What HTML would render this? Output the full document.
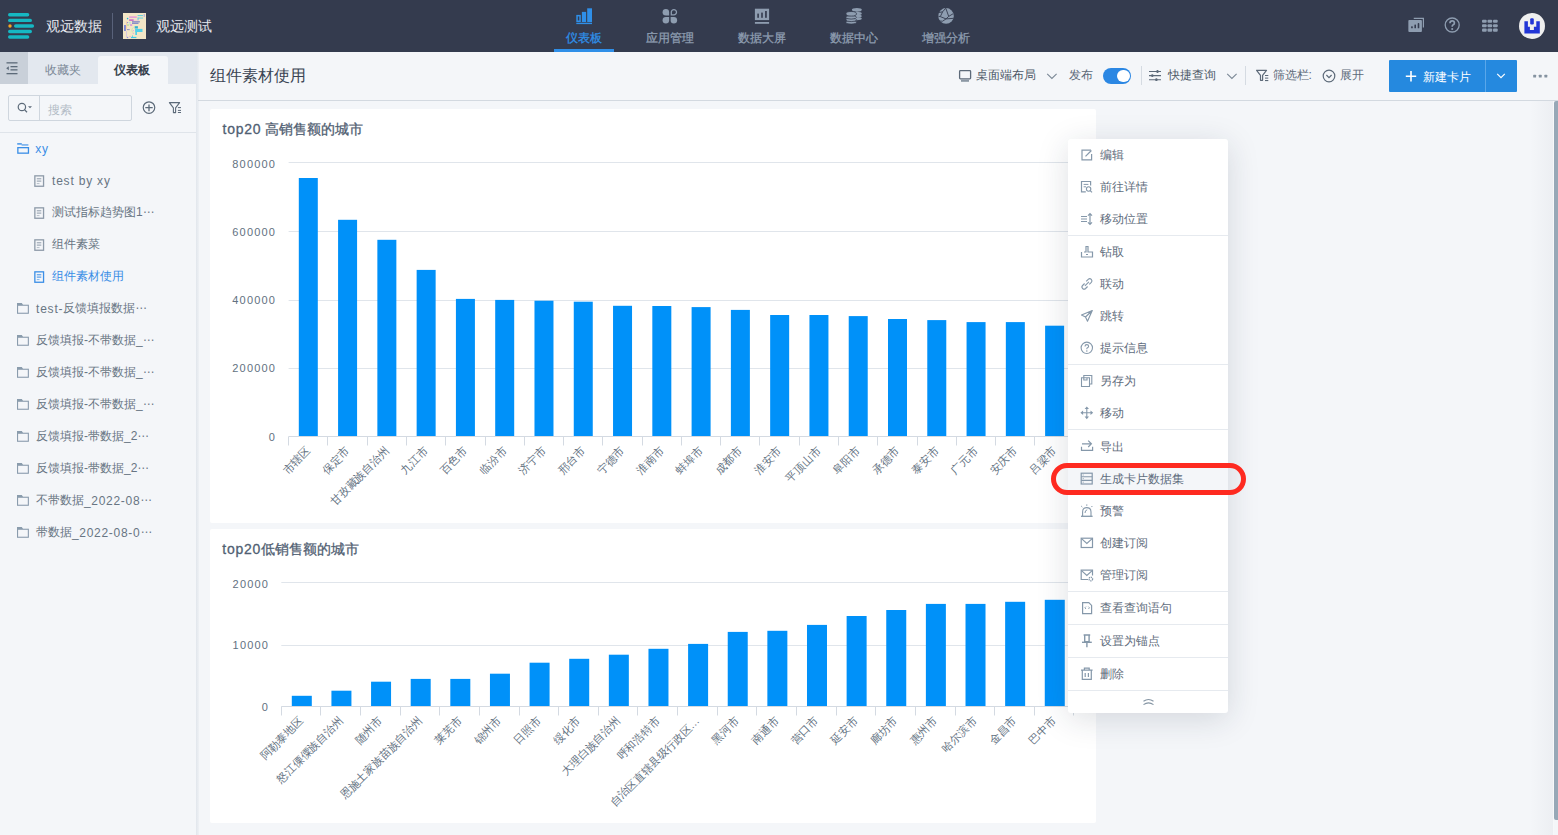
<!DOCTYPE html><html><head><meta charset="utf-8"><style>
*{margin:0;padding:0;box-sizing:border-box}
html,body{width:1558px;height:835px;overflow:hidden;background:#f4f6f9;font-family:"Liberation Sans",sans-serif;}
.a{position:absolute;white-space:nowrap}
.t{position:absolute;white-space:nowrap;line-height:16px;font-size:12px}
.nav{position:absolute;top:30px;font-size:12px;line-height:16px;color:#8d9cb0}
.ls{letter-spacing:.8px;position:relative;top:.8px}
.el{position:relative;top:-3px;letter-spacing:.5px}
</style></head><body>
<div class="a" style="left:0px;top:0px;width:1558px;height:52px;background:#343b4e;"></div>
<svg class="a" style="left:0px;top:0px;" width="40" height="52" viewBox="0 0 40 52"><g stroke="#16b8c3" stroke-width="3.4" stroke-linecap="round">
<line x1="9.7" y1="14.8" x2="27.6" y2="14.8"/><line x1="9.7" y1="20.4" x2="30.3" y2="20.4"/>
<line x1="15.7" y1="26" x2="32.4" y2="26"/><line x1="9.7" y1="31.5" x2="30.3" y2="31.5"/>
<line x1="9.7" y1="37" x2="27.6" y2="37"/></g><circle cx="10" cy="26" r="1.7" fill="#f6a623"/></svg>
<div class="t" style="left:46.0px;top:17.8px;font-size:14px;color:#e6e9ee;">观远数据</div>
<div class="a" style="left:112px;top:13px;width:1px;height:26px;background:#59627a;"></div>
<svg class="a" style="left:123px;top:12.9px;" width="23" height="26" viewBox="0 0 23 26"><rect width="23" height="26" fill="#f3e6c6"/>
<rect x="1" y="12" width="1.9" height="6" fill="#7d86d2"/>
<rect x="3" y="8.6" width=".7" height="8" fill="#f5c59c"/><rect x="3" y="18" width=".7" height="6.6" fill="#cbbbe6"/>
<circle cx="4.6" cy="5.6" r=".8" fill="#1ab0e0"/><circle cx="4.6" cy="9.6" r=".7" fill="#8c90d8"/><circle cx="4.6" cy="24.5" r=".7" fill="#8c90d8"/>
<rect x="6.1" y="3.3" width="7.7" height="1.7" fill="#e6a2d6"/>
<rect x="6.1" y="6.3" width="4.6" height="1.6" fill="#c66ac8"/><rect x="10.7" y="6.8" width="5.3" height=".6" fill="#eab8dc"/>
<rect x="14.6" y="2.1" width="5.3" height="1" fill="#5cd0e0"/><rect x="14.6" y="4.6" width="5.5" height=".9" fill="#5cd0e0"/><rect x="14.6" y="4.6" width=".9" height="2.6" fill="#5cd0e0"/>
<rect x="20.7" y="1.1" width="1.1" height="2.7" fill="#a8a8e0"/>
<rect x="9" y="8.2" width="7.9" height="1.2" fill="#7f86c8"/><rect x="9" y="9.6" width="6.5" height="1.3" fill="#7f86c8"/>
<rect x="6" y="8.9" width="1.8" height=".8" fill="#9ee0e0"/><rect x="6" y="10.6" width="1.8" height=".8" fill="#9ee0e0"/>
<rect x="4" y="11.3" width="2.1" height="1.5" fill="#b8e0a0"/><rect x="7.1" y="11.3" width="2.1" height="1.5" fill="#d88ad8"/>
<rect x="11.7" y="13.2" width="3.2" height="2.3" fill="#30b0d0"/>
<rect x="4" y="16.3" width="2.7" height=".8" fill="#7078c0"/>
<path d="M10.5 14.5 A2.6 2.8 0 0 0 10.5 19.8" fill="none" stroke="#c6e4a6" stroke-width=".7"/>
<rect x="12.3" y="15.9" width="7.2" height="3.1" fill="#52d0e8"/><rect x="12.3" y="15.9" width="1.7" height="6.1" fill="#52d0e8"/>
<circle cx="10.3" cy="17.6" r=".6" fill="#e6a0d8"/><circle cx="10.3" cy="20.5" r=".6" fill="#e6a0d8"/>
<rect x="8" y="23.9" width="5.4" height="1.2" fill="#40c8e8"/><rect x="9" y="22.4" width=".7" height="1.6" fill="#40c8e8"/>
<rect x="6.1" y="23.2" width="1.9" height=".9" fill="#e6b0e0"/></svg>
<div class="t" style="left:156.0px;top:17.8px;font-size:14px;color:#e6e9ee;">观远测试</div>
<div class="t" style="left:565.6px;top:30.2px;font-size:12px;color:#2f8fe8;-webkit-text-stroke:.3px #2f8fe8">仪表板</div>
<div class="t" style="left:646.1px;top:30.2px;font-size:12px;color:#8e9db0;-webkit-text-stroke:.3px #8e9db0">应用管理</div>
<div class="t" style="left:737.6px;top:30.2px;font-size:12px;color:#8e9db0;-webkit-text-stroke:.3px #8e9db0">数据大屏</div>
<div class="t" style="left:830.1px;top:30.2px;font-size:12px;color:#8e9db0;-webkit-text-stroke:.3px #8e9db0">数据中心</div>
<div class="t" style="left:921.6px;top:30.2px;font-size:12px;color:#8e9db0;-webkit-text-stroke:.3px #8e9db0">增强分析</div>
<div class="a" style="left:554px;top:49px;width:60px;height:3px;background:#2f8fe8;"></div>
<svg class="a" style="left:572px;top:4px;" width="24" height="24" viewBox="0 0 24 24"><g fill="#2f8fe8"><rect x="5.05" y="11.65" width="3" height="5.6" fill="none" stroke="#2f8fe8" stroke-width="1.5"/>
<rect x="9.9" y="7.9" width="4.2" height="10.1"/><rect x="15.2" y="4.3" width="4.8" height="13.7"/>
<rect x="4.3" y="18.7" width="15.7" height="1.4"/></g></svg>
<svg class="a" style="left:658px;top:4px;" width="24" height="24" viewBox="0 0 24 24"><g fill="#8e9db0"><path d="M11.1 11.5 H7.85 A3.25 3.25 0 1 1 11.1 8.25 Z"/><path d="M11.1 12.9 H7.85 A3.25 3.25 0 1 0 11.1 16.15 Z"/>
<path d="M12.6 12.9 H15.85 A3.25 3.25 0 1 1 12.6 16.15 Z"/></g>
<path d="M13.3 10.8 V8.25 A2.6 2.6 0 1 1 15.85 10.8 Z" fill="none" stroke="#8e9db0" stroke-width="1.3"/></svg>
<svg class="a" style="left:750px;top:4px;" width="24" height="24" viewBox="0 0 24 24"><rect x="4.9" y="4.7" width="14.2" height="11.4" fill="#8e9db0"/>
<g fill="#343b4e"><rect x="7.3" y="9.6" width="1.6" height="4.2"/><rect x="11.2" y="8.6" width="1.6" height="5.2"/><rect x="15.1" y="7" width="1.7" height="6.8"/></g>
<rect x="4.9" y="18" width="14.2" height="1.8" fill="#8e9db0"/></svg>
<svg class="a" style="left:842px;top:4px;" width="24" height="24" viewBox="0 0 24 24"><g fill="#8e9db0">
<ellipse cx="14.85" cy="14.6" rx="4.95" ry="1.6"/><ellipse cx="14.85" cy="12" rx="4.95" ry="1.6"/><ellipse cx="14.85" cy="9.4" rx="4.95" ry="1.6"/><ellipse cx="14.85" cy="5.8" rx="4.95" ry="1.9"/>
</g><g fill="#8e9db0" stroke="#343b4e" stroke-width=".8">
<ellipse cx="9.2" cy="18.3" rx="5.3" ry="1.8"/><ellipse cx="9.2" cy="15.8" rx="5.3" ry="1.8"/><ellipse cx="9.2" cy="13.3" rx="5.3" ry="1.8"/><ellipse cx="9.2" cy="9.8" rx="5.3" ry="2.3"/>
</g></svg>
<svg class="a" style="left:934px;top:4px;" width="24" height="24" viewBox="0 0 24 24"><circle cx="12.05" cy="11.9" r="7.8" fill="#8e9db0"/>
<g stroke="#343b4e" stroke-width=".9" fill="none" stroke-linejoin="round"><path d="M11.8 4.2 L8.6 7.8 L6.3 12.6 L12 14.9 L19.8 14.3"/><path d="M11.8 4.2 L14.7 12.4 L19 9.8"/><path d="M14.7 12.4 L12 14.9 L8.6 17.2 L5.2 17"/><path d="M4.3 12.2 L6.3 12.6"/><path d="M8.6 7.8 L4.6 8.6"/></g></svg>
<svg class="a" style="left:1404px;top:14px;" width="24" height="22" viewBox="0 0 24 22"><path d="M9.75 4.4 H19.4 V13.4" fill="none" stroke="#8e9db0" stroke-width="1.2"/>
<rect x="4.35" y="6.06" width="13.55" height="11.84" rx=".9" fill="#8e9db0"/>
<g fill="#343b4e"><rect x="7.1" y="12.25" width="1.7" height="2.1" rx=".6"/><rect x="10.4" y="10.5" width="1.6" height="3.85" rx=".6"/><rect x="13.7" y="9.1" width="1.6" height="5.25" rx=".6"/></g></svg>
<svg class="a" style="left:1442px;top:15px;" width="20" height="20" viewBox="0 0 20 20"><circle cx="10.2" cy="10" r="7" fill="none" stroke="#8e9db0" stroke-width="1.3"/>
<path d="M8 8.2 Q8 5.8 10.2 5.8 Q12.4 5.8 12.4 8 Q12.4 9.4 10.9 10.1 Q10.2 10.5 10.2 11.8" fill="none" stroke="#8e9db0" stroke-width="1.7"/>
<circle cx="10.2" cy="14" r="1.05" fill="#8e9db0"/></svg>
<svg class="a" style="left:1480px;top:15px;" width="20" height="20" viewBox="0 0 20 20"><rect x="2.00" y="4.70" width="4.7" height="3.1" rx="1" fill="#8e9db0"/><rect x="7.50" y="4.70" width="4.7" height="3.1" rx="1" fill="#8e9db0"/><rect x="13.00" y="4.70" width="4.7" height="3.1" rx="1" fill="#8e9db0"/><rect x="2.00" y="9.15" width="4.7" height="3.1" rx="1" fill="#8e9db0"/><rect x="7.50" y="9.15" width="4.7" height="3.1" rx="1" fill="#8e9db0"/><rect x="13.00" y="9.15" width="4.7" height="3.1" rx="1" fill="#8e9db0"/><rect x="2.00" y="13.60" width="4.7" height="3.1" rx="1" fill="#8e9db0"/><rect x="7.50" y="13.60" width="4.7" height="3.1" rx="1" fill="#8e9db0"/><rect x="13.00" y="13.60" width="4.7" height="3.1" rx="1" fill="#8e9db0"/></svg>
<div class="a" style="left:1519.2px;top:12.85px;width:25.8px;height:25.8px;background:#efefef;border-radius:50%"></div>
<svg class="a" style="left:1518px;top:12px;" width="28" height="28" viewBox="0 0 28 28"><path fill="#2236d6" d="M6.4 9.2 H9.9 V14.8 H11.9 V18.1 H15.9 V14.8 H18.3 V9.2 H21.8 V21.5 H6.4 Z"/><rect x="12.2" y="6.2" width="3.6" height="6.2" rx="1.2" fill="#2236d6"/></svg>
<div class="a" style="left:0px;top:52px;width:196px;height:783px;background:#f4f6f9;"></div>
<div class="a" style="left:0px;top:52px;width:196px;height:32px;background:#e3e8ef;"></div>
<div class="a" style="left:0px;top:52px;width:28px;height:32px;background:#c9d0d9;"></div>
<div class="a" style="left:98px;top:56px;width:70px;height:28px;background:#f4f6f9;border-radius:3px 3px 0 0"></div>
<svg class="a" style="left:4px;top:58px;" width="22" height="22" viewBox="0 0 22 22"><g fill="#5c6a79"><rect x="2.5" y="4.2" width="11" height="1.3"/><rect x="6.5" y="8" width="7" height="1.3"/><rect x="6.5" y="11.2" width="7" height="1.3"/><rect x="2.5" y="15" width="11" height="1.3"/>
<path d="M2.2 10.3 L4.8 8.3 V12.3 Z"/></g></svg>
<div class="t" style="left:44.8px;top:62.1px;font-size:12px;color:#7a8795;">收藏夹</div>
<div class="t" style="left:114.3px;top:62.3px;font-size:12px;color:#2b3442;-webkit-text-stroke:.45px #2b3442">仪表板</div>
<div class="a" style="left:8px;top:95px;width:124px;height:26px;background:transparent;border:1px solid #cfd6de;border-radius:2px"></div>
<div class="a" style="left:39px;top:95px;width:1px;height:26px;background:#cfd6de;"></div>
<svg class="a" style="left:14px;top:98px;" width="22" height="20" viewBox="0 0 22 20"><circle cx="7.9" cy="9" r="3.7" fill="none" stroke="#5c6a79" stroke-width="1.2"/>
<path d="M10.5 11.6 L13 14.2" stroke="#5c6a79" stroke-width="1.3"/><path d="M14 8.2 H18 L16 10.3 Z" fill="#5c6a79"/></svg>
<div class="t" style="left:47.5px;top:101.6px;font-size:12px;color:#b3bcc6;">搜索</div>
<svg class="a" style="left:140px;top:98px;" width="20" height="20" viewBox="0 0 20 20"><circle cx="9" cy="9.6" r="5.75" fill="none" stroke="#5c6a79" stroke-width="1.2"/><path d="M9 6.4 V13.2 M5.3 9.7 H12.7" stroke="#5c6a79" stroke-width="1.3"/></svg>
<svg class="a" style="left:166px;top:99px;" width="20" height="18" viewBox="0 0 20 18"><path d="M3.4 3.6 H13.6 L9.6 8.8 V13.6 H7.4 V8.8 Z" fill="none" stroke="#5c6a79" stroke-width="1.1" stroke-linejoin="round"/>
<g fill="#5c6a79"><rect x="11.9" y="8.1" width="3.1" height="1"/><rect x="11.9" y="10.9" width="3.1" height="1"/><rect x="11.9" y="13" width="3.1" height="1"/></g></svg>
<div class="a" style="left:0px;top:132px;width:196px;height:1px;background:#dfe4ea;"></div>
<svg class="a" style="left:16px;top:142px;" width="14" height="14" viewBox="0 0 14 14"><rect x="1.2" y="1.2" width="4.6" height="1.4" fill="#3a8ee6"/><rect x="5.6" y="2.4" width="6.8" height="1.1" fill="#3a8ee6"/><rect x="1.85" y="5.65" width="10.6" height="5.5" fill="none" stroke="#3a8ee6" stroke-width="1.3"/></svg>
<div class="t" style="left:35.3px;top:140.4px;font-size:12px;color:#3a8ee6;"><span class="ls">xy</span></div>
<svg class="a" style="left:33.8px;top:174.6px;" width="14" height="14" viewBox="0 0 14 14"><rect x="0.85" y="0.85" width="8.7" height="10.4" fill="none" stroke="#8d9aa8" stroke-width="1.3"/><path d="M2.8 3.8 H7.3 M2.8 6.1 H7.3" stroke="#8d9aa8" stroke-width="1"/><path d="M2.8 8.6 H5.5" stroke="#8d9aa8" stroke-width="1" opacity=".6"/></svg>
<div class="t" style="left:52.0px;top:172.4px;font-size:12px;color:#687583;"><span class="ls">test by xy</span></div>
<svg class="a" style="left:33.8px;top:206.6px;" width="14" height="14" viewBox="0 0 14 14"><rect x="0.85" y="0.85" width="8.7" height="10.4" fill="none" stroke="#8d9aa8" stroke-width="1.3"/><path d="M2.8 3.8 H7.3 M2.8 6.1 H7.3" stroke="#8d9aa8" stroke-width="1"/><path d="M2.8 8.6 H5.5" stroke="#8d9aa8" stroke-width="1" opacity=".6"/></svg>
<div class="t" style="left:52.0px;top:204.4px;font-size:12px;color:#687583;">测试指标趋势图1<span class="el">…</span></div>
<svg class="a" style="left:33.8px;top:238.6px;" width="14" height="14" viewBox="0 0 14 14"><rect x="0.85" y="0.85" width="8.7" height="10.4" fill="none" stroke="#8d9aa8" stroke-width="1.3"/><path d="M2.8 3.8 H7.3 M2.8 6.1 H7.3" stroke="#8d9aa8" stroke-width="1"/><path d="M2.8 8.6 H5.5" stroke="#8d9aa8" stroke-width="1" opacity=".6"/></svg>
<div class="t" style="left:52.0px;top:236.4px;font-size:12px;color:#687583;">组件素菜</div>
<svg class="a" style="left:33.8px;top:270.6px;" width="14" height="14" viewBox="0 0 14 14"><rect x="0.85" y="0.85" width="8.7" height="10.4" fill="none" stroke="#3a8ee6" stroke-width="1.3"/><path d="M2.8 3.8 H7.3 M2.8 6.1 H7.3" stroke="#3a8ee6" stroke-width="1"/><path d="M2.8 8.6 H5.5" stroke="#3a8ee6" stroke-width="1" opacity=".6"/></svg>
<div class="t" style="left:52.0px;top:268.4px;font-size:12px;color:#3a8ee6;">组件素材使用</div>
<svg class="a" style="left:16px;top:303.1px;" width="14" height="14" viewBox="0 0 14 14"><path d="M1 0.1 H5.8 L7.1 2 H1 Z" fill="#8a9cad"/><rect x="1.55" y="2.25" width="10.8" height="8" fill="none" stroke="#8a9cad" stroke-width="1.1"/></svg>
<div class="t" style="left:36.0px;top:300.4px;font-size:12px;color:#687583;"><span class="ls">test-</span>反馈填报数据<span class="el">…</span></div>
<svg class="a" style="left:16px;top:335.1px;" width="14" height="14" viewBox="0 0 14 14"><path d="M1 0.1 H5.8 L7.1 2 H1 Z" fill="#8a9cad"/><rect x="1.55" y="2.25" width="10.8" height="8" fill="none" stroke="#8a9cad" stroke-width="1.1"/></svg>
<div class="t" style="left:36.0px;top:332.4px;font-size:12px;color:#687583;">反馈填报-不带数据_<span class="el">…</span></div>
<svg class="a" style="left:16px;top:367.1px;" width="14" height="14" viewBox="0 0 14 14"><path d="M1 0.1 H5.8 L7.1 2 H1 Z" fill="#8a9cad"/><rect x="1.55" y="2.25" width="10.8" height="8" fill="none" stroke="#8a9cad" stroke-width="1.1"/></svg>
<div class="t" style="left:36.0px;top:364.4px;font-size:12px;color:#687583;">反馈填报-不带数据_<span class="el">…</span></div>
<svg class="a" style="left:16px;top:399.1px;" width="14" height="14" viewBox="0 0 14 14"><path d="M1 0.1 H5.8 L7.1 2 H1 Z" fill="#8a9cad"/><rect x="1.55" y="2.25" width="10.8" height="8" fill="none" stroke="#8a9cad" stroke-width="1.1"/></svg>
<div class="t" style="left:36.0px;top:396.4px;font-size:12px;color:#687583;">反馈填报-不带数据_<span class="el">…</span></div>
<svg class="a" style="left:16px;top:431.1px;" width="14" height="14" viewBox="0 0 14 14"><path d="M1 0.1 H5.8 L7.1 2 H1 Z" fill="#8a9cad"/><rect x="1.55" y="2.25" width="10.8" height="8" fill="none" stroke="#8a9cad" stroke-width="1.1"/></svg>
<div class="t" style="left:36.0px;top:428.4px;font-size:12px;color:#687583;">反馈填报-带数据_2<span class="el">…</span></div>
<svg class="a" style="left:16px;top:463.1px;" width="14" height="14" viewBox="0 0 14 14"><path d="M1 0.1 H5.8 L7.1 2 H1 Z" fill="#8a9cad"/><rect x="1.55" y="2.25" width="10.8" height="8" fill="none" stroke="#8a9cad" stroke-width="1.1"/></svg>
<div class="t" style="left:36.0px;top:460.4px;font-size:12px;color:#687583;">反馈填报-带数据_2<span class="el">…</span></div>
<svg class="a" style="left:16px;top:495.1px;" width="14" height="14" viewBox="0 0 14 14"><path d="M1 0.1 H5.8 L7.1 2 H1 Z" fill="#8a9cad"/><rect x="1.55" y="2.25" width="10.8" height="8" fill="none" stroke="#8a9cad" stroke-width="1.1"/></svg>
<div class="t" style="left:36.0px;top:492.4px;font-size:12px;color:#687583;">不带数据<span class="ls" style="letter-spacing:.7px">_2022-08</span><span class="el">…</span></div>
<svg class="a" style="left:16px;top:527.1px;" width="14" height="14" viewBox="0 0 14 14"><path d="M1 0.1 H5.8 L7.1 2 H1 Z" fill="#8a9cad"/><rect x="1.55" y="2.25" width="10.8" height="8" fill="none" stroke="#8a9cad" stroke-width="1.1"/></svg>
<div class="t" style="left:36.0px;top:524.4px;font-size:12px;color:#687583;">带数据<span class="ls" style="letter-spacing:.7px">_2022-08-0</span><span class="el">…</span></div>
<div class="a" style="left:196px;top:52px;width:3px;height:783px;background:linear-gradient(90deg,#e1e6ec,#eef1f5);"></div>
<div class="t" style="left:209.5px;top:67.8px;font-size:16px;color:#3a4453;">组件素材使用</div>
<div class="a" style="left:198px;top:100px;width:1360px;height:1px;background:#d3d9e0;"></div>
<svg class="a" style="left:956px;top:67px;" width="18" height="18" viewBox="0 0 18 18"><rect x="3.6" y="3.6" width="11" height="8.2" rx=".8" fill="none" stroke="#5d6a79" stroke-width="1.3"/><rect x="5" y="12.5" width="8" height="2.3" fill="#8c98a5"/></svg>
<div class="t" style="left:975.5px;top:67.2px;font-size:12px;color:#4d5968;">桌面端布局</div>
<svg class="a" style="left:1044px;top:70px;" width="16" height="12" viewBox="0 0 16 12"><path d="M3.2 3.8 L7.9 8.4 L12.6 3.8" fill="none" stroke="#7b8896" stroke-width="1.1"/></svg>
<div class="t" style="left:1069.0px;top:67.2px;font-size:12px;color:#5d6a79;">发布</div>
<div class="a" style="left:1103px;top:68px;width:28px;height:16px;background:#2b87e3;border-radius:8px"></div>
<div class="a" style="left:1117.2px;top:69.8px;width:12.4px;height:12.4px;background:#fff;border-radius:50%"></div>
<div class="a" style="left:1141px;top:66px;width:1px;height:19px;background:#d5dbe2;"></div>
<svg class="a" style="left:1146px;top:68px;" width="18" height="16" viewBox="0 0 18 16"><g stroke="#5d6a79" stroke-width="1.1"><path d="M3 3.5 H15 M3 7.6 H15 M3 11.7 H15"/></g>
<g fill="#5d6a79"><rect x="10.4" y="2.1" width="2.2" height="2.8" rx=".9"/><rect x="5.2" y="6.2" width="2.2" height="2.8" rx=".9"/><rect x="9.3" y="10.3" width="2.2" height="2.8" rx=".9"/></g></svg>
<div class="t" style="left:1167.5px;top:67.2px;font-size:12px;color:#4d5968;">快捷查询</div>
<svg class="a" style="left:1224px;top:70px;" width="16" height="12" viewBox="0 0 16 12"><path d="M3.2 3.8 L7.9 8.4 L12.6 3.8" fill="none" stroke="#7b8896" stroke-width="1.1"/></svg>
<div class="a" style="left:1244.5px;top:66px;width:1px;height:19px;background:#d5dbe2;"></div>
<svg class="a" style="left:1254px;top:67px;" width="18" height="16" viewBox="0 0 18 16"><path d="M2.6 3.3 H12.5 L8.6 8.3 V13.3 H6.5 V8.3 Z" fill="none" stroke="#5d6a79" stroke-width="1.2" stroke-linejoin="round"/>
<g fill="#5d6a79"><rect x="11" y="8" width="3.3" height="1"/><rect x="11" y="10.6" width="3.3" height="1"/><rect x="11" y="13" width="3.3" height="1.1"/></g></svg>
<div class="t" style="left:1272.5px;top:67.2px;font-size:12px;color:#5d6a79;">筛选栏:</div>
<svg class="a" style="left:1320px;top:67px;" width="18" height="18" viewBox="0 0 18 18"><circle cx="9" cy="9" r="5.8" fill="none" stroke="#5d6a79" stroke-width="1.2"/><path d="M6.4 8 L9 10.6 L11.6 8" fill="none" stroke="#5d6a79" stroke-width="1.2"/></svg>
<div class="t" style="left:1340.0px;top:67.2px;font-size:12px;color:#5d6a79;">展开</div>
<div class="a" style="left:1389px;top:60px;width:128px;height:32px;background:#2589df;border-radius:1px"></div>
<div class="a" style="left:1485px;top:60px;width:1px;height:32px;background:#5aa7ea;"></div>
<svg class="a" style="left:1403px;top:67px;" width="16" height="18" viewBox="0 0 16 18"><path d="M8 4 V14.5 M2.8 9.2 H13.2" stroke="#fff" stroke-width="1.6"/></svg>
<div class="t" style="left:1423.0px;top:68.8px;font-size:12px;color:#ffffff;">新建卡片</div>
<svg class="a" style="left:1493px;top:70px;" width="16" height="12" viewBox="0 0 16 12"><path d="M4.2 3.9 L8 7.6 L11.8 3.9" fill="none" stroke="#fff" stroke-width="1.2"/></svg>
<svg class="a" style="left:1530px;top:70px;" width="20" height="12" viewBox="0 0 20 12"><g fill="#8593a1"><rect x="3.2" y="4.7" width="2.9" height="2.8" rx=".6"/><rect x="8.8" y="4.7" width="2.9" height="2.8" rx=".6"/><rect x="14.4" y="4.7" width="2.9" height="2.8" rx=".6"/></g></svg>
<div class="a" style="left:210px;top:109px;width:886px;height:413.5px;background:#fff;border-radius:2px"></div>
<div class="a" style="left:210px;top:528.7px;width:886px;height:294px;background:#fff;border-radius:2px"></div>
<div class="t" style="left:222.5px;top:120.7px;font-size:14px;color:#506072;-webkit-text-stroke:.28px #506072"><span style="letter-spacing:.75px">top20</span> 高销售额的城市</div>
<div class="t" style="left:222.3px;top:540.5px;font-size:14px;color:#506072;-webkit-text-stroke:.28px #506072"><span style="letter-spacing:.75px">top20</span>低销售额的城市</div>
<svg class="a" style="left:0;top:0;font-family:'Liberation Sans',sans-serif" width="1558" height="835"><line x1="288.6" y1="162.5" x2="1074.2" y2="162.5" stroke="#e0e5eb" stroke-width="1"/><line x1="288.6" y1="231.5" x2="1074.2" y2="231.5" stroke="#e0e5eb" stroke-width="1"/><line x1="288.6" y1="300.5" x2="1074.2" y2="300.5" stroke="#e0e5eb" stroke-width="1"/><line x1="288.6" y1="368.5" x2="1074.2" y2="368.5" stroke="#e0e5eb" stroke-width="1"/><rect x="298.80" y="178.00" width="19" height="258.00" fill="#0091f9"/><rect x="338.08" y="219.80" width="19" height="216.20" fill="#0091f9"/><rect x="377.36" y="239.80" width="19" height="196.20" fill="#0091f9"/><rect x="416.64" y="269.90" width="19" height="166.10" fill="#0091f9"/><rect x="455.92" y="298.90" width="19" height="137.10" fill="#0091f9"/><rect x="495.20" y="299.90" width="19" height="136.10" fill="#0091f9"/><rect x="534.48" y="300.70" width="19" height="135.30" fill="#0091f9"/><rect x="573.76" y="301.70" width="19" height="134.30" fill="#0091f9"/><rect x="613.04" y="305.80" width="19" height="130.20" fill="#0091f9"/><rect x="652.32" y="306.00" width="19" height="130.00" fill="#0091f9"/><rect x="691.60" y="307.10" width="19" height="128.90" fill="#0091f9"/><rect x="730.88" y="309.90" width="19" height="126.10" fill="#0091f9"/><rect x="770.16" y="315.00" width="19" height="121.00" fill="#0091f9"/><rect x="809.44" y="315.00" width="19" height="121.00" fill="#0091f9"/><rect x="848.72" y="316.10" width="19" height="119.90" fill="#0091f9"/><rect x="888.00" y="319.00" width="19" height="117.00" fill="#0091f9"/><rect x="927.28" y="320.10" width="19" height="115.90" fill="#0091f9"/><rect x="966.56" y="322.10" width="19" height="113.90" fill="#0091f9"/><rect x="1005.84" y="322.10" width="19" height="113.90" fill="#0091f9"/><rect x="1045.12" y="325.70" width="19" height="110.30" fill="#0091f9"/><line x1="288.6" y1="436.5" x2="1074.2" y2="436.5" stroke="#d4dae2" stroke-width="1"/><line x1="288.5" y1="436.5" x2="288.5" y2="445.5" stroke="#d4dae2" stroke-width="1"/><line x1="327.5" y1="436.5" x2="327.5" y2="445.5" stroke="#d4dae2" stroke-width="1"/><line x1="367.5" y1="436.5" x2="367.5" y2="445.5" stroke="#d4dae2" stroke-width="1"/><line x1="406.5" y1="436.5" x2="406.5" y2="445.5" stroke="#d4dae2" stroke-width="1"/><line x1="445.5" y1="436.5" x2="445.5" y2="445.5" stroke="#d4dae2" stroke-width="1"/><line x1="485.5" y1="436.5" x2="485.5" y2="445.5" stroke="#d4dae2" stroke-width="1"/><line x1="524.5" y1="436.5" x2="524.5" y2="445.5" stroke="#d4dae2" stroke-width="1"/><line x1="563.5" y1="436.5" x2="563.5" y2="445.5" stroke="#d4dae2" stroke-width="1"/><line x1="602.5" y1="436.5" x2="602.5" y2="445.5" stroke="#d4dae2" stroke-width="1"/><line x1="642.5" y1="436.5" x2="642.5" y2="445.5" stroke="#d4dae2" stroke-width="1"/><line x1="681.5" y1="436.5" x2="681.5" y2="445.5" stroke="#d4dae2" stroke-width="1"/><line x1="720.5" y1="436.5" x2="720.5" y2="445.5" stroke="#d4dae2" stroke-width="1"/><line x1="759.5" y1="436.5" x2="759.5" y2="445.5" stroke="#d4dae2" stroke-width="1"/><line x1="799.5" y1="436.5" x2="799.5" y2="445.5" stroke="#d4dae2" stroke-width="1"/><line x1="838.5" y1="436.5" x2="838.5" y2="445.5" stroke="#d4dae2" stroke-width="1"/><line x1="877.5" y1="436.5" x2="877.5" y2="445.5" stroke="#d4dae2" stroke-width="1"/><line x1="917.5" y1="436.5" x2="917.5" y2="445.5" stroke="#d4dae2" stroke-width="1"/><line x1="956.5" y1="436.5" x2="956.5" y2="445.5" stroke="#d4dae2" stroke-width="1"/><line x1="995.5" y1="436.5" x2="995.5" y2="445.5" stroke="#d4dae2" stroke-width="1"/><line x1="1034.5" y1="436.5" x2="1034.5" y2="445.5" stroke="#d4dae2" stroke-width="1"/><line x1="1074.5" y1="436.5" x2="1074.5" y2="445.5" stroke="#d4dae2" stroke-width="1"/><text x="276.2" y="165.3" text-anchor="end" dominant-baseline="middle" font-size="11" letter-spacing="1.2" fill="#627181">800000</text><text x="276.2" y="233.35" text-anchor="end" dominant-baseline="middle" font-size="11" letter-spacing="1.2" fill="#627181">600000</text><text x="276.2" y="301.35" text-anchor="end" dominant-baseline="middle" font-size="11" letter-spacing="1.2" fill="#627181">400000</text><text x="276.2" y="369.35" text-anchor="end" dominant-baseline="middle" font-size="11" letter-spacing="1.2" fill="#627181">200000</text><text x="276.2" y="438.4" text-anchor="end" dominant-baseline="middle" font-size="11" letter-spacing="1.2" fill="#627181">0</text><text transform="translate(308.84,449.5) rotate(-45)" text-anchor="end" dominant-baseline="middle" font-size="11" fill="#627181">市辖区</text><text transform="translate(348.12,449.5) rotate(-45)" text-anchor="end" dominant-baseline="middle" font-size="11" fill="#627181">保定市</text><text transform="translate(387.40,449.5) rotate(-45)" text-anchor="end" dominant-baseline="middle" font-size="11" fill="#627181">甘孜藏族自治州</text><text transform="translate(426.68,449.5) rotate(-45)" text-anchor="end" dominant-baseline="middle" font-size="11" fill="#627181">九江市</text><text transform="translate(465.96,449.5) rotate(-45)" text-anchor="end" dominant-baseline="middle" font-size="11" fill="#627181">百色市</text><text transform="translate(505.24,449.5) rotate(-45)" text-anchor="end" dominant-baseline="middle" font-size="11" fill="#627181">临汾市</text><text transform="translate(544.52,449.5) rotate(-45)" text-anchor="end" dominant-baseline="middle" font-size="11" fill="#627181">济宁市</text><text transform="translate(583.80,449.5) rotate(-45)" text-anchor="end" dominant-baseline="middle" font-size="11" fill="#627181">邢台市</text><text transform="translate(623.08,449.5) rotate(-45)" text-anchor="end" dominant-baseline="middle" font-size="11" fill="#627181">宁德市</text><text transform="translate(662.36,449.5) rotate(-45)" text-anchor="end" dominant-baseline="middle" font-size="11" fill="#627181">淮南市</text><text transform="translate(701.64,449.5) rotate(-45)" text-anchor="end" dominant-baseline="middle" font-size="11" fill="#627181">蚌埠市</text><text transform="translate(740.92,449.5) rotate(-45)" text-anchor="end" dominant-baseline="middle" font-size="11" fill="#627181">成都市</text><text transform="translate(780.20,449.5) rotate(-45)" text-anchor="end" dominant-baseline="middle" font-size="11" fill="#627181">淮安市</text><text transform="translate(819.48,449.5) rotate(-45)" text-anchor="end" dominant-baseline="middle" font-size="11" fill="#627181">平顶山市</text><text transform="translate(858.76,449.5) rotate(-45)" text-anchor="end" dominant-baseline="middle" font-size="11" fill="#627181">阜阳市</text><text transform="translate(898.04,449.5) rotate(-45)" text-anchor="end" dominant-baseline="middle" font-size="11" fill="#627181">承德市</text><text transform="translate(937.32,449.5) rotate(-45)" text-anchor="end" dominant-baseline="middle" font-size="11" fill="#627181">泰安市</text><text transform="translate(976.60,449.5) rotate(-45)" text-anchor="end" dominant-baseline="middle" font-size="11" fill="#627181">广元市</text><text transform="translate(1015.88,449.5) rotate(-45)" text-anchor="end" dominant-baseline="middle" font-size="11" fill="#627181">安庆市</text><text transform="translate(1055.16,449.5) rotate(-45)" text-anchor="end" dominant-baseline="middle" font-size="11" fill="#627181">吕梁市</text><line x1="281.3" y1="582.5" x2="1073.9" y2="582.5" stroke="#e0e5eb" stroke-width="1"/><line x1="281.3" y1="645.5" x2="1073.9" y2="645.5" stroke="#e0e5eb" stroke-width="1"/><rect x="291.80" y="695.80" width="20" height="10.20" fill="#0091f9"/><rect x="331.43" y="690.70" width="20" height="15.30" fill="#0091f9"/><rect x="371.06" y="681.70" width="20" height="24.30" fill="#0091f9"/><rect x="410.69" y="678.90" width="20" height="27.10" fill="#0091f9"/><rect x="450.32" y="678.90" width="20" height="27.10" fill="#0091f9"/><rect x="489.95" y="673.70" width="20" height="32.30" fill="#0091f9"/><rect x="529.58" y="662.70" width="20" height="43.30" fill="#0091f9"/><rect x="569.21" y="658.80" width="20" height="47.20" fill="#0091f9"/><rect x="608.84" y="654.70" width="20" height="51.30" fill="#0091f9"/><rect x="648.47" y="648.80" width="20" height="57.20" fill="#0091f9"/><rect x="688.10" y="643.90" width="20" height="62.10" fill="#0091f9"/><rect x="727.73" y="631.90" width="20" height="74.10" fill="#0091f9"/><rect x="767.36" y="630.80" width="20" height="75.20" fill="#0091f9"/><rect x="806.99" y="624.90" width="20" height="81.10" fill="#0091f9"/><rect x="846.62" y="616.00" width="20" height="90.00" fill="#0091f9"/><rect x="886.25" y="610.00" width="20" height="96.00" fill="#0091f9"/><rect x="925.88" y="603.90" width="20" height="102.10" fill="#0091f9"/><rect x="965.51" y="603.90" width="20" height="102.10" fill="#0091f9"/><rect x="1005.14" y="601.80" width="20" height="104.20" fill="#0091f9"/><rect x="1044.77" y="599.80" width="20" height="106.20" fill="#0091f9"/><line x1="281.3" y1="706.5" x2="1073.9" y2="706.5" stroke="#d4dae2" stroke-width="1"/><line x1="281.5" y1="706.5" x2="281.5" y2="715.5" stroke="#d4dae2" stroke-width="1"/><line x1="320.5" y1="706.5" x2="320.5" y2="715.5" stroke="#d4dae2" stroke-width="1"/><line x1="360.5" y1="706.5" x2="360.5" y2="715.5" stroke="#d4dae2" stroke-width="1"/><line x1="400.5" y1="706.5" x2="400.5" y2="715.5" stroke="#d4dae2" stroke-width="1"/><line x1="439.5" y1="706.5" x2="439.5" y2="715.5" stroke="#d4dae2" stroke-width="1"/><line x1="479.5" y1="706.5" x2="479.5" y2="715.5" stroke="#d4dae2" stroke-width="1"/><line x1="519.5" y1="706.5" x2="519.5" y2="715.5" stroke="#d4dae2" stroke-width="1"/><line x1="558.5" y1="706.5" x2="558.5" y2="715.5" stroke="#d4dae2" stroke-width="1"/><line x1="598.5" y1="706.5" x2="598.5" y2="715.5" stroke="#d4dae2" stroke-width="1"/><line x1="637.5" y1="706.5" x2="637.5" y2="715.5" stroke="#d4dae2" stroke-width="1"/><line x1="677.5" y1="706.5" x2="677.5" y2="715.5" stroke="#d4dae2" stroke-width="1"/><line x1="717.5" y1="706.5" x2="717.5" y2="715.5" stroke="#d4dae2" stroke-width="1"/><line x1="756.5" y1="706.5" x2="756.5" y2="715.5" stroke="#d4dae2" stroke-width="1"/><line x1="796.5" y1="706.5" x2="796.5" y2="715.5" stroke="#d4dae2" stroke-width="1"/><line x1="836.5" y1="706.5" x2="836.5" y2="715.5" stroke="#d4dae2" stroke-width="1"/><line x1="875.5" y1="706.5" x2="875.5" y2="715.5" stroke="#d4dae2" stroke-width="1"/><line x1="915.5" y1="706.5" x2="915.5" y2="715.5" stroke="#d4dae2" stroke-width="1"/><line x1="955.5" y1="706.5" x2="955.5" y2="715.5" stroke="#d4dae2" stroke-width="1"/><line x1="994.5" y1="706.5" x2="994.5" y2="715.5" stroke="#d4dae2" stroke-width="1"/><line x1="1034.5" y1="706.5" x2="1034.5" y2="715.5" stroke="#d4dae2" stroke-width="1"/><line x1="1073.5" y1="706.5" x2="1073.5" y2="715.5" stroke="#d4dae2" stroke-width="1"/><text x="269.2" y="585.35" text-anchor="end" dominant-baseline="middle" font-size="11" letter-spacing="1.2" fill="#627181">20000</text><text x="269.2" y="646.45" text-anchor="end" dominant-baseline="middle" font-size="11" letter-spacing="1.2" fill="#627181">10000</text><text x="269.2" y="708.45" text-anchor="end" dominant-baseline="middle" font-size="11" letter-spacing="1.2" fill="#627181">0</text><text transform="translate(301.72,719.5) rotate(-45)" text-anchor="end" dominant-baseline="middle" font-size="11" fill="#627181">阿勒泰地区</text><text transform="translate(341.35,719.5) rotate(-45)" text-anchor="end" dominant-baseline="middle" font-size="11" fill="#627181">怒江傈僳族自治州</text><text transform="translate(380.98,719.5) rotate(-45)" text-anchor="end" dominant-baseline="middle" font-size="11" fill="#627181">随州市</text><text transform="translate(420.61,719.5) rotate(-45)" text-anchor="end" dominant-baseline="middle" font-size="11" fill="#627181">恩施土家族苗族自治州</text><text transform="translate(460.24,719.5) rotate(-45)" text-anchor="end" dominant-baseline="middle" font-size="11" fill="#627181">莱芜市</text><text transform="translate(499.87,719.5) rotate(-45)" text-anchor="end" dominant-baseline="middle" font-size="11" fill="#627181">锦州市</text><text transform="translate(539.50,719.5) rotate(-45)" text-anchor="end" dominant-baseline="middle" font-size="11" fill="#627181">日照市</text><text transform="translate(579.13,719.5) rotate(-45)" text-anchor="end" dominant-baseline="middle" font-size="11" fill="#627181">绥化市</text><text transform="translate(618.76,719.5) rotate(-45)" text-anchor="end" dominant-baseline="middle" font-size="11" fill="#627181">大理白族自治州</text><text transform="translate(658.39,719.5) rotate(-45)" text-anchor="end" dominant-baseline="middle" font-size="11" fill="#627181">呼和浩特市</text><text transform="translate(698.02,719.5) rotate(-45)" text-anchor="end" dominant-baseline="middle" font-size="11" fill="#627181">自治区直辖县级行政区…</text><text transform="translate(737.65,719.5) rotate(-45)" text-anchor="end" dominant-baseline="middle" font-size="11" fill="#627181">黑河市</text><text transform="translate(777.28,719.5) rotate(-45)" text-anchor="end" dominant-baseline="middle" font-size="11" fill="#627181">南通市</text><text transform="translate(816.91,719.5) rotate(-45)" text-anchor="end" dominant-baseline="middle" font-size="11" fill="#627181">营口市</text><text transform="translate(856.54,719.5) rotate(-45)" text-anchor="end" dominant-baseline="middle" font-size="11" fill="#627181">延安市</text><text transform="translate(896.17,719.5) rotate(-45)" text-anchor="end" dominant-baseline="middle" font-size="11" fill="#627181">廊坊市</text><text transform="translate(935.80,719.5) rotate(-45)" text-anchor="end" dominant-baseline="middle" font-size="11" fill="#627181">惠州市</text><text transform="translate(975.43,719.5) rotate(-45)" text-anchor="end" dominant-baseline="middle" font-size="11" fill="#627181">哈尔滨市</text><text transform="translate(1015.06,719.5) rotate(-45)" text-anchor="end" dominant-baseline="middle" font-size="11" fill="#627181">金昌市</text><text transform="translate(1054.69,719.5) rotate(-45)" text-anchor="end" dominant-baseline="middle" font-size="11" fill="#627181">巴中市</text></svg>
<div class="a" style="left:1068px;top:139px;width:160px;height:574px;background:#fff;border-radius:3px;box-shadow:0 6px 32px rgba(30,40,60,.15)"></div>
<div class="a" style="left:1068px;top:463px;width:160px;height:32px;background:#f4f6f9;"></div>
<svg class="a" style="left:1080px;top:148px;" width="14" height="14" viewBox="0 0 14 14"><path d="M11 2.2 H2 V11.8 H11.6 V6" fill="none" stroke="#8598aa" stroke-width="1.2"/><path d="M5.5 8.4 L11.4 2.5" stroke="#8598aa" stroke-width="1.2"/></svg>
<div class="t" style="left:1099.5px;top:146.9px;font-size:12px;color:#5f6d7d;">编辑</div>
<svg class="a" style="left:1080px;top:180px;" width="14" height="14" viewBox="0 0 14 14"><path d="M10.6 5.5 V1.5 H1.5 V11.8 H5.8" fill="none" stroke="#8598aa" stroke-width="1.2"/><path d="M3.6 4.4 H8.4 M3.6 6.8 H6" stroke="#8598aa" stroke-width="1"/><circle cx="8.6" cy="9" r="2.2" fill="none" stroke="#8598aa" stroke-width="1.1"/><path d="M10.2 10.6 L12 12.4" stroke="#8598aa" stroke-width="1.2"/></svg>
<div class="t" style="left:1099.5px;top:178.9px;font-size:12px;color:#5f6d7d;">前往详情</div>
<svg class="a" style="left:1080px;top:212px;" width="14" height="14" viewBox="0 0 14 14"><path d="M1 4.5 H7 M1 7 H7 M1 9.5 H7" stroke="#8598aa" stroke-width="1.1"/><path d="M10 1.5 V12.5 M8 3.6 L10 1.5 L12 3.6 M8 10.4 L10 12.5 L12 10.4" fill="none" stroke="#8598aa" stroke-width="1.2"/></svg>
<div class="t" style="left:1099.5px;top:210.9px;font-size:12px;color:#5f6d7d;">移动位置</div>
<svg class="a" style="left:1080px;top:245px;" width="14" height="14" viewBox="0 0 14 14"><path d="M1.5 7 V12 H12.5 V7 H10" fill="none" stroke="#8598aa" stroke-width="1.2"/><path d="M4 7 H6 V1.5 H8 V7 H10" fill="none" stroke="#8598aa" stroke-width="1.2"/><path d="M6 9.5 H8" stroke="#8598aa" stroke-width="1.1"/></svg>
<div class="t" style="left:1099.5px;top:243.9px;font-size:12px;color:#5f6d7d;">钻取</div>
<svg class="a" style="left:1080px;top:277px;" width="14" height="14" viewBox="0 0 14 14"><path d="M6.2 4.3 L8.2 2.3 Q9.8 0.9 11.3 2.4 Q12.7 3.9 11.3 5.4 L9.3 7.4 M7.6 9.5 L5.6 11.5 Q4.1 12.9 2.6 11.5 Q1.1 10 2.6 8.5 L4.6 6.5 M4.9 8.9 L8.9 4.9" fill="none" stroke="#8598aa" stroke-width="1.1"/></svg>
<div class="t" style="left:1099.5px;top:275.9px;font-size:12px;color:#5f6d7d;">联动</div>
<svg class="a" style="left:1080px;top:309px;" width="14" height="14" viewBox="0 0 14 14"><path d="M12.3 1.5 L1.5 6 L5.5 8 L7.5 12.2 Z M5.5 8 L12.3 1.5" fill="none" stroke="#8598aa" stroke-width="1.1" stroke-linejoin="round"/></svg>
<div class="t" style="left:1099.5px;top:307.9px;font-size:12px;color:#5f6d7d;">跳转</div>
<svg class="a" style="left:1080px;top:341px;" width="14" height="14" viewBox="0 0 14 14"><circle cx="6.8" cy="6.8" r="5.7" fill="none" stroke="#8598aa" stroke-width="1.1"/><path d="M5 5.4 Q5 3.6 6.8 3.6 Q8.6 3.6 8.6 5.2 Q8.6 6.3 7.4 6.8 Q6.8 7.1 6.8 8.2" fill="none" stroke="#8598aa" stroke-width="1.1"/><circle cx="6.8" cy="9.9" r=".75" fill="#8598aa"/></svg>
<div class="t" style="left:1099.5px;top:339.9px;font-size:12px;color:#5f6d7d;">提示信息</div>
<svg class="a" style="left:1080px;top:374px;" width="14" height="14" viewBox="0 0 14 14"><path d="M1.5 3.8 H9.5 V12.5 H1.5 Z M3.8 3.8 V1.5 H11.8 V10 H9.5 M3.8 3.8 V6 H7 V3.8" fill="none" stroke="#8598aa" stroke-width="1.1"/></svg>
<div class="t" style="left:1099.5px;top:372.9px;font-size:12px;color:#5f6d7d;">另存为</div>
<svg class="a" style="left:1080px;top:406px;" width="14" height="14" viewBox="0 0 14 14"><path d="M6.8 2 V11.6 M2 6.8 H11.6" stroke="#8598aa" stroke-width="1.1"/><path d="M4.6 3.1 L6.8 0.4 L9 3.1 Z M4.6 10.5 L6.8 13.2 L9 10.5 Z M3.1 4.6 L0.4 6.8 L3.1 9 Z M10.5 4.6 L13.2 6.8 L10.5 9 Z" fill="#8598aa"/></svg>
<div class="t" style="left:1099.5px;top:404.9px;font-size:12px;color:#5f6d7d;">移动</div>
<svg class="a" style="left:1080px;top:440px;" width="14" height="14" viewBox="0 0 14 14"><path d="M1.5 6.8 V10.3 H12.6 V6.8" fill="none" stroke="#8598aa" stroke-width="1.2"/><path d="M2 3.8 H11.3 M8.2 0.6 L11.4 3.8 L8.2 7" fill="none" stroke="#8598aa" stroke-width="1.2"/></svg>
<div class="t" style="left:1099.5px;top:438.5px;font-size:12px;color:#5f6d7d;">导出</div>
<svg class="a" style="left:1080px;top:472px;" width="14" height="14" viewBox="0 0 14 14"><rect x="1.2" y="1.2" width="11" height="10.8" fill="none" stroke="#8598aa" stroke-width="1.2"/><path d="M1.2 4.8 H12.2 M1.2 8.4 H12.2" stroke="#8598aa" stroke-width="1.1"/><path d="M2.7 3 H3.7 M2.7 6.6 H3.7 M2.7 10.2 H3.7" stroke="#8598aa" stroke-width=".9"/></svg>
<div class="t" style="left:1099.5px;top:470.7px;font-size:12px;color:#5f6d7d;">生成卡片数据集</div>
<svg class="a" style="left:1080px;top:504px;" width="14" height="14" viewBox="0 0 14 14"><path d="M2.6 12 V8 Q2.6 3.6 6.8 3.6 Q11 3.6 11 8 V12" fill="none" stroke="#8598aa" stroke-width="1.1"/><path d="M1 12.3 H12.6" stroke="#8598aa" stroke-width="1.3"/><path d="M6.8 0.4 V1.8 M1.2 2 L2.3 3.1 M12.4 2 L11.3 3.1 M5 9 Q5 6.2 7.2 5.8" fill="none" stroke="#8598aa" stroke-width="1"/></svg>
<div class="t" style="left:1099.5px;top:502.9px;font-size:12px;color:#5f6d7d;">预警</div>
<svg class="a" style="left:1080px;top:536px;" width="14" height="14" viewBox="0 0 14 14"><rect x="1.2" y="2.2" width="11.3" height="9.3" fill="none" stroke="#8598aa" stroke-width="1.2"/><path d="M1.5 2.6 L6.85 7.5 L12.2 2.6" fill="none" stroke="#8598aa" stroke-width="1.2"/></svg>
<div class="t" style="left:1099.5px;top:535.1px;font-size:12px;color:#5f6d7d;">创建订阅</div>
<svg class="a" style="left:1080px;top:568px;" width="14" height="14" viewBox="0 0 14 14"><path d="M8 11.5 H1.2 V2.2 H12.5 V7.5" fill="none" stroke="#8598aa" stroke-width="1.2"/><path d="M1.5 2.6 L6.85 7.5 L12.2 2.6" fill="none" stroke="#8598aa" stroke-width="1.2"/><circle cx="10.8" cy="11" r="1.8" fill="none" stroke="#8598aa" stroke-width="1.3" stroke-dasharray="1.2 .7"/></svg>
<div class="t" style="left:1099.5px;top:566.9px;font-size:12px;color:#5f6d7d;">管理订阅</div>
<svg class="a" style="left:1080px;top:602px;" width="14" height="14" viewBox="0 0 14 14"><path d="M2.6 0.6 H8.8 L11.6 3.4 V11.6 H2.6 Z" fill="none" stroke="#8598aa" stroke-width="1.2"/><path d="M6 4.6 L4.9 5.8 L6 7 M8.4 4.6 L9.5 5.8 L8.4 7" fill="none" stroke="#8598aa" stroke-width=".9"/></svg>
<div class="t" style="left:1099.5px;top:600.4px;font-size:12px;color:#5f6d7d;">查看查询语句</div>
<svg class="a" style="left:1080px;top:634px;" width="14" height="14" viewBox="0 0 14 14"><path d="M3.6 1 H10.2 M4.7 1 V7.6 H9.1 V1" fill="none" stroke="#8598aa" stroke-width="1.4"/><path d="M2 8.3 H11.8" stroke="#8598aa" stroke-width="1.4"/><path d="M6.9 8.3 V13.2" stroke="#8598aa" stroke-width="1.4"/></svg>
<div class="t" style="left:1099.5px;top:632.9px;font-size:12px;color:#5f6d7d;">设置为锚点</div>
<svg class="a" style="left:1080px;top:667px;" width="14" height="14" viewBox="0 0 14 14"><path d="M1 3.2 H12.6 M4.4 3.2 V1.2 H9.2 V3.2 M2.3 3.2 V12.4 H11.3 V3.2 M5.2 6 V10 M8.4 6 V10" fill="none" stroke="#8598aa" stroke-width="1.2"/></svg>
<div class="t" style="left:1099.5px;top:665.9px;font-size:12px;color:#5f6d7d;">删除</div>
<div class="a" style="left:1068px;top:235px;width:160px;height:1px;background:#e6eaef;"></div>
<div class="a" style="left:1068px;top:364px;width:160px;height:1px;background:#e6eaef;"></div>
<div class="a" style="left:1068px;top:429px;width:160px;height:1px;background:#e6eaef;"></div>
<div class="a" style="left:1068px;top:591px;width:160px;height:1px;background:#e6eaef;"></div>
<div class="a" style="left:1068px;top:624px;width:160px;height:1px;background:#e6eaef;"></div>
<div class="a" style="left:1068px;top:657px;width:160px;height:1px;background:#e6eaef;"></div>
<div class="a" style="left:1068px;top:690px;width:160px;height:1px;background:#e6eaef;"></div>
<svg class="a" style="left:1140px;top:694px;" width="18" height="16" viewBox="0 0 18 16"><path d="M3.5 7.2 Q8.5 3.8 13.5 7.2 M3.5 10.6 Q8.5 7.2 13.5 10.6" fill="none" stroke="#8494a3" stroke-width="1.1"/></svg>
<div class="a" style="left:1051px;top:463px;width:195px;height:32px;border:5px solid #fe2a20;border-radius:16px"></div>
<div class="a" style="left:1530px;top:101px;width:23px;height:734px;background:linear-gradient(90deg,rgba(20,30,60,0),rgba(20,30,60,.035));"></div>
<div class="a" style="left:1553px;top:101px;width:1px;height:734px;background:#f7f8fa;"></div>
<div class="a" style="left:1554px;top:101px;width:4px;height:719px;background:#97a8b7;border-radius:2px 0 0 2px"></div>
</body></html>
